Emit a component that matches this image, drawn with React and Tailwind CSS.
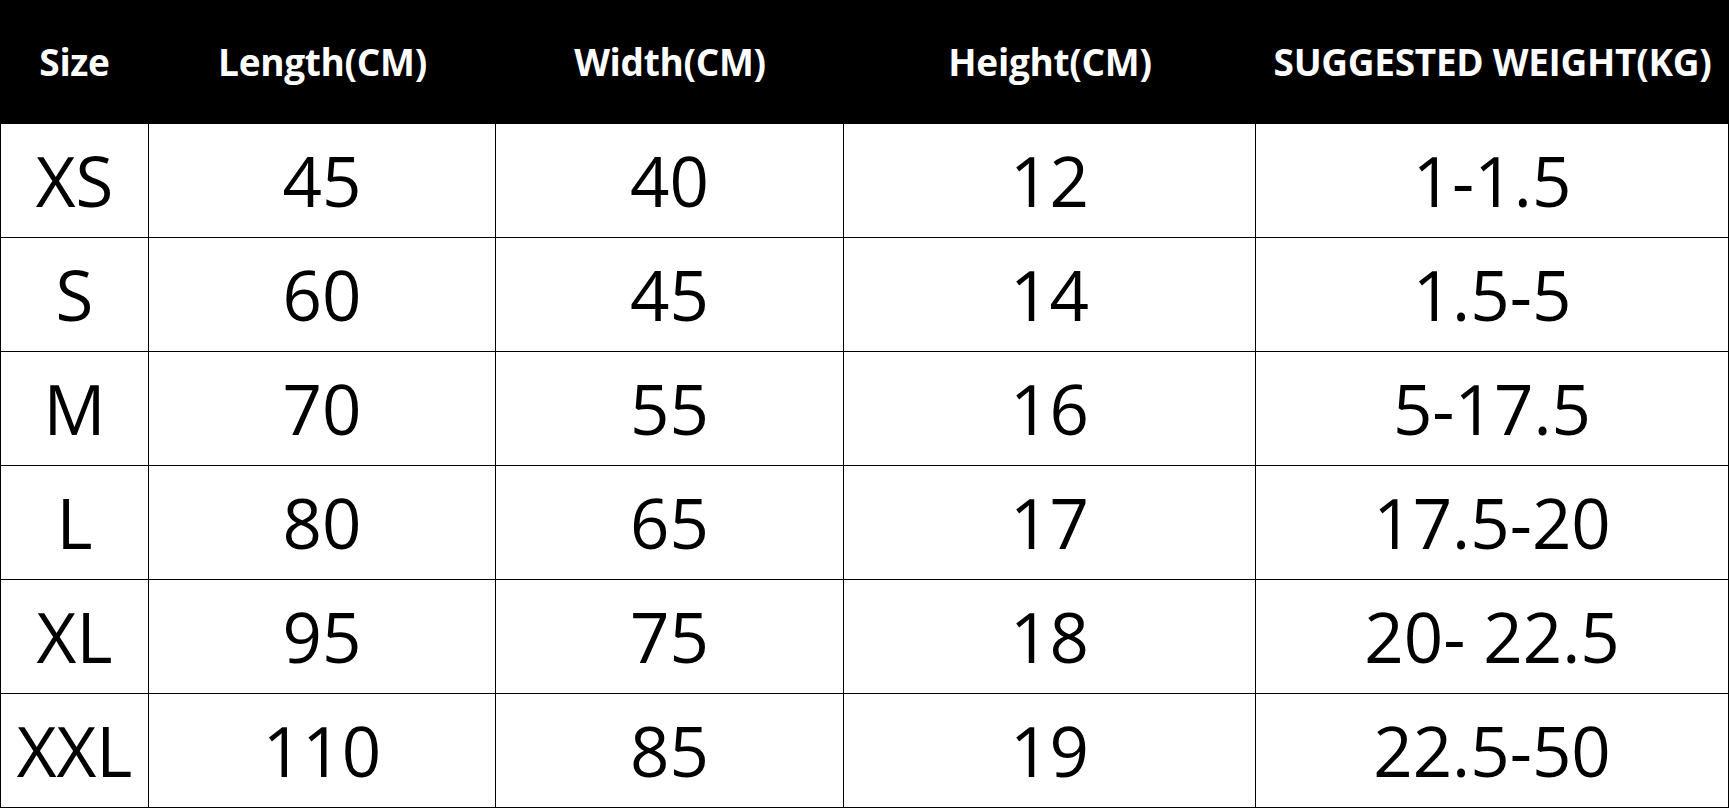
const headers = ['Size', 'Length(CM)', 'Width(CM)', 'Height(CM)', 'SUGGESTED WEIGHT(KG)']

const rows = [
  ['XS', '45', '40', '12', '1-1.5'],
  ['S', '60', '45', '14', '1.5-5'],
  ['M', '70', '55', '16', '5-17.5'],
  ['L', '80', '65', '17', '17.5-20'],
  ['XL', '95', '75', '18', '20- 22.5'],
  ['XXL', '110', '85', '19', '22.5-50'],
]

const SizeChart = () => {
  return (
    <div className="w-[1729px] h-[809px] bg-white overflow-hidden font-['Open_Sans',sans-serif]">
      <div className="grid grid-cols-[149px_347px_348px_412px_473px] h-[124px] bg-black text-white font-bold text-[37px] tracking-[-0.3px]">
        {headers.map((h) => (
          <div key={h} className="flex items-center justify-center whitespace-nowrap">
            {h}
          </div>
        ))}
      </div>
      {rows.map((row) => (
        <div
          key={row[0]}
          className="grid grid-cols-[149px_347px_348px_412px_473px] h-[114px] border-b border-black text-black text-[69px]"
        >
          {row.map((cell, i) => (
            <div
              key={i}
              className={`flex items-center justify-center whitespace-pre border-r border-black ${i === 0 ? 'border-l' : ''}`}
            >
              {cell}
            </div>
          ))}
        </div>
      ))}
    </div>
  )
}

export default function App() {
  return <SizeChart />
}
